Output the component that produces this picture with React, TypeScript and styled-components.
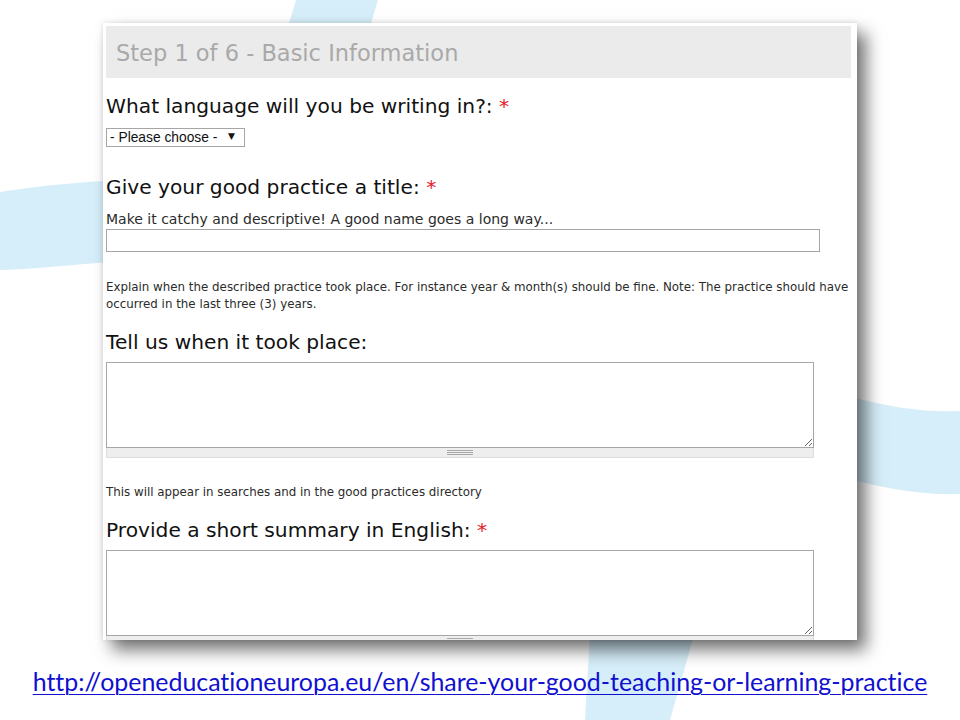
import React from 'react'
import styled, { createGlobalStyle } from 'styled-components'

const SKY = '#d6eef9'
const LABEL_FONT = "'DejaVu Sans', Verdana, sans-serif"

const GlobalStyle = createGlobalStyle`
  html, body {
    margin: 0;
    padding: 0;
    background: #ffffff;
  }
`

const Slide = styled.div`
  position: relative;
  width: 960px;
  height: 720px;
  overflow: hidden;
  background: #ffffff;
`

const Backdrop = styled.svg`
  position: absolute;
  inset: 0;
  z-index: 0;
`

const SlideContent = styled.div`
  position: relative;
  z-index: 1;
  display: flex;
  flex-direction: column;
  align-items: flex-start;
  padding-top: 23px;
`

const Panel = styled.div`
  margin-left: 103px;
  width: 754px;
  height: 617px;
  box-sizing: border-box;
  padding: 3px 6px 0 3px;
  background: #ffffff;
  overflow: hidden;
  box-shadow: 9px 10px 16px rgba(0, 0, 0, 0.55), 0 0 5px rgba(0, 0, 0, 0.12);
`

const StepHeader = styled.h1`
  margin: 0;
  height: 52px;
  padding-left: 10px;
  background: #ebebeb;
  color: #a9a9a9;
  font-family: ${LABEL_FONT};
  font-weight: normal;
  font-size: 22.5px;
  line-height: 54px;
`

const Label = styled.label<{ $gap: number }>`
  display: block;
  margin-top: ${(p) => p.$gap}px;
  color: #111111;
  font-family: ${LABEL_FONT};
  font-size: 20.2px;
  line-height: 24px;
`

const Required = styled.span`
  color: #e8202a;
`

const Hint = styled.div<{ $gap: number }>`
  margin-top: ${(p) => p.$gap}px;
  color: #2b2b2b;
  font-family: ${LABEL_FONT};
  font-size: 14px;
  line-height: 16px;
`

const Note = styled.div<{ $gap: number }>`
  margin-top: ${(p) => p.$gap}px;
  color: #2b2b2b;
  font-family: ${LABEL_FONT};
  font-size: 11.85px;
  line-height: 17px;
`

const SelectWrap = styled.div`
  position: relative;
  margin-top: 10px;
  width: 139px;
  height: 19px;

  &::after {
    content: '▼';
    position: absolute;
    right: 10px;
    top: 3px;
    font-size: 9px;
    color: #111111;
    pointer-events: none;
    font-family: 'DejaVu Sans', sans-serif;
  }
`

const Select = styled.select`
  appearance: none;
  width: 100%;
  height: 100%;
  box-sizing: border-box;
  margin: 0;
  padding: 0 0 0 3px;
  border: 1px solid #a6a6a6;
  border-radius: 0;
  background: #ffffff;
  color: #111111;
  font-family: 'Liberation Sans', Arial, sans-serif;
  font-size: 13.8px;
`

const TextInput = styled.input`
  display: block;
  margin-top: 2px;
  width: 714px;
  height: 23px;
  box-sizing: border-box;
  border: 1px solid #a6a6a6;
  padding: 2px 4px;
  font-family: 'Liberation Sans', Arial, sans-serif;
  font-size: 13px;
`

const TextAreaBlock = styled.div`
  margin-top: 8px;
  width: 708px;
`

const TextArea = styled.textarea`
  display: block;
  width: 100%;
  height: 86px;
  box-sizing: border-box;
  margin: 0;
  border: 1px solid #a6a6a6;
  resize: vertical;
  font-family: 'Liberation Sans', Arial, sans-serif;
  font-size: 13px;
`

const Grippie = styled.div`
  display: flex;
  justify-content: center;
  align-items: center;
  height: 10px;
  box-sizing: border-box;
  background: #eeeeee;
  border: 1px solid #dddddd;
  border-top: none;
`

const GrippieLines = styled.span`
  position: relative;
  width: 26px;
  height: 5px;
  box-sizing: border-box;
  border-top: 1px solid #a9a9a9;
  border-bottom: 1px solid #a9a9a9;

  &::after {
    content: '';
    position: absolute;
    left: 0;
    right: 0;
    top: 1px;
    height: 1px;
    background: #a9a9a9;
  }
`

const SourceLink = styled.a`
  align-self: center;
  margin-top: 26px;
  color: #1010d0;
  font-family: Lato, 'Open Sans', sans-serif;
  font-size: 24.9px;
  font-variant-ligatures: none;
  line-height: 30px;
  text-decoration: underline;
  text-underline-offset: 3px;
  text-decoration-thickness: 1px;
`

interface IAreaProps {
  name: string;
}

const ResizableArea = ({ name }: IAreaProps): JSX.Element => (
  <TextAreaBlock>
    <TextArea name={name} />
    <Grippie>
      <GrippieLines />
    </Grippie>
  </TextAreaBlock>
)

export default function App(): JSX.Element {
  return (
    <Slide>
      <GlobalStyle />
      <Backdrop width='960' height='720' viewBox='0 0 960 720'>
        <polygon points='296,0 378,0 366,40 284,40' fill={SKY} />
        <path
          d='M0,192 C60,182 160,174 300,182 C520,200 760,420 960,411 L960,494 C760,500 520,290 300,262 C180,248 80,268 0,270 Z'
          fill={SKY}
        />
        <polygon points='592,600 704,600 670,720 585,720' fill={SKY} />
      </Backdrop>
      <SlideContent>
        <Panel>
          <StepHeader>Step 1 of 6 - Basic Information</StepHeader>

          <Label $gap={16}>
            What language will you be writing in?: <Required>*</Required>
          </Label>
          <SelectWrap>
            <Select defaultValue=''>
              <option value=''>- Please choose -</option>
            </Select>
          </SelectWrap>

          <Label $gap={28}>
            Give your good practice a title: <Required>*</Required>
          </Label>
          <Hint $gap={12}>Make it catchy and descriptive! A good name goes a long way...</Hint>
          <TextInput type='text' />

          <Note $gap={27}>
            Explain when the described practice took place. For instance year &amp; month(s) should be fine. Note: The practice should have occurred in the last three (3) years.
          </Note>
          <Label $gap={17}>Tell us when it took place:</Label>
          <ResizableArea name='when' />

          <Note $gap={26}>This will appear in searches and in the good practices directory</Note>
          <Label $gap={17}>
            Provide a short summary in English: <Required>*</Required>
          </Label>
          <ResizableArea name='summary' />
        </Panel>
        <SourceLink href='#'>
          http://openeducationeuropa.eu/en/share-your-good-teaching-or-learning-practice
        </SourceLink>
      </SlideContent>
    </Slide>
  )
}
